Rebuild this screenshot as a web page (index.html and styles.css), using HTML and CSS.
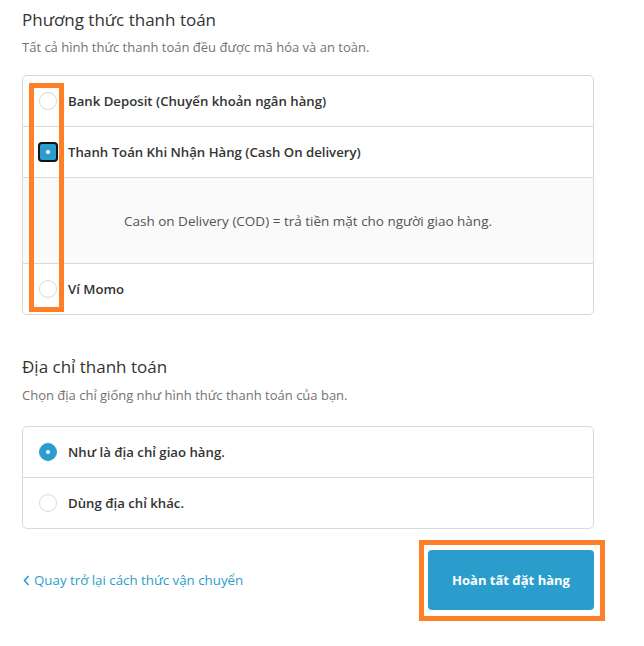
FILE: index.html
```html
<!DOCTYPE html>
<html lang="vi">
<head>
<meta charset="utf-8">
<title>Phương thức thanh toán</title>
<link rel="stylesheet" href="styles.css">
</head>
<body>
<div class="page">
  <section class="section">
    <h2 class="section-title">Phương thức thanh toán</h2>
    <p class="section-sub">Tất cả hình thức thanh toán đều được mã hóa và an toàn.</p>
    <div class="box">
      <div class="row"><span class="radio"></span><span class="label">Bank Deposit (Chuyển khoản ngân hàng)</span></div>
      <div class="row"><span class="radio focused"><span class="dot"></span></span><span class="label">Thanh Toán Khi Nhận Hàng (Cash On delivery)</span></div>
      <div class="panel">Cash on Delivery (COD) = trả tiền mặt cho người giao hàng.</div>
      <div class="row"><span class="radio"></span><span class="label">Ví Momo</span></div>
    </div>
    <div class="mark mark-radios"></div>
  </section>

  <section class="section second">
    <h2 class="section-title">Địa chỉ thanh toán</h2>
    <p class="section-sub">Chọn địa chỉ giống như hình thức thanh toán của bạn.</p>
    <div class="box">
      <div class="row"><span class="radio checked"><span class="dot"></span></span><span class="label">Như là địa chỉ giao hàng.</span></div>
      <div class="row"><span class="radio"></span><span class="label">Dùng địa chỉ khác.</span></div>
    </div>
  </section>

  <div class="footer">
    <a class="back" href="#"><svg class="chev" width="7" height="11" viewBox="0 0 7 11"><path d="M5.5 1 L1.5 5.5 L5.5 10" fill="none" stroke="#2a9dcc" stroke-width="1.6"/></svg>Quay trở lại cách thức vận chuyển</a>
    <div class="btn-wrap">
      <button class="btn">Hoàn tất đặt hàng</button>
      <div class="mark mark-btn"></div>
    </div>
  </div>
</div>
</body>
</html>
```

FILE: styles.css
```css
* { box-sizing: border-box; }
html, body { min-height: 100%; }
body {
  margin: 0;
  background: #fff;
  font-family: "Open Sans", "Noto Sans", sans-serif;
  color: #333;
}
.page {
  width: 572px;
  margin-left: 22px;
  padding-bottom: 35px;
}
.section { position: relative; }
.section-title {
  margin: 0;
  padding-top: 8px;
  font-size: 17px;
  font-weight: 400;
  line-height: 24px;
  color: #333;
}
.section-sub {
  margin: 6px 0 0;
  font-size: 13px;
  line-height: 18px;
  color: #737373;
}
.box {
  margin-top: 19px;
  border: 1px solid #d9d9d9;
  border-radius: 5px;
  overflow: hidden;
}
.row {
  height: 51px;
  display: flex;
  align-items: center;
  padding-left: 16px;
  border-top: 1px solid #d9d9d9;
}
.row:first-child { border-top: 0; height: 50px; }
.radio {
  width: 18px;
  height: 18px;
  border: 1px solid #d9d9d9;
  border-radius: 50%;
  background: #fff;
  display: flex;
  align-items: center;
  justify-content: center;
  flex: none;
  margin-right: 11px;
}
.radio .dot {
  width: 4px;
  height: 4px;
  border-radius: 50%;
  background: #fff;
}
.radio.checked {
  background: #2a9dcc;
  border-color: #2a9dcc;
}
.radio.focused {
  width: 20px;
  height: 20px;
  margin-left: -1px;
  margin-right: 10px;
  background: #2a9dcc;
  border: 2px solid #111;
  border-radius: 4px;
}
.label {
  font-size: 13.2px;
  font-weight: 600;
  color: #333;
}
.panel {
  height: 86px;
  border-top: 1px solid #d9d9d9;
  background: #fafafa;
  display: flex;
  align-items: center;
  justify-content: center;
  font-size: 13.5px;
  color: #545454;
}
.second { margin-top: 32px; }
.second .section-sub { margin-top: 7px; }
.second .box { margin-top: 22px; }
.footer {
  margin-top: 21px;
  display: flex;
  align-items: center;
  justify-content: space-between;
}
.back {
  display: flex;
  align-items: center;
  gap: 4px;
  font-size: 13.3px;
  color: #2a9dcc;
  text-decoration: none;
}
.chev { margin-left: 1px; }
.btn-wrap { position: relative; }
.btn {
  display: block;
  width: 166px;
  height: 60px;
  border: 0;
  border-radius: 4px;
  background: #2a9dcc;
  color: #fff;
  font-family: "Open Sans", "Noto Sans", sans-serif;
  font-size: 13px;
  font-weight: 700;
}
.mark {
  position: absolute;
  border: 5px solid #ff7f27;
}
.mark-radios {
  left: 7px;
  top: 83px;
  width: 35px;
  height: 229px;
}
.mark-btn {
  left: -9px;
  top: -10px;
  width: 186px;
  height: 81px;
}
```
